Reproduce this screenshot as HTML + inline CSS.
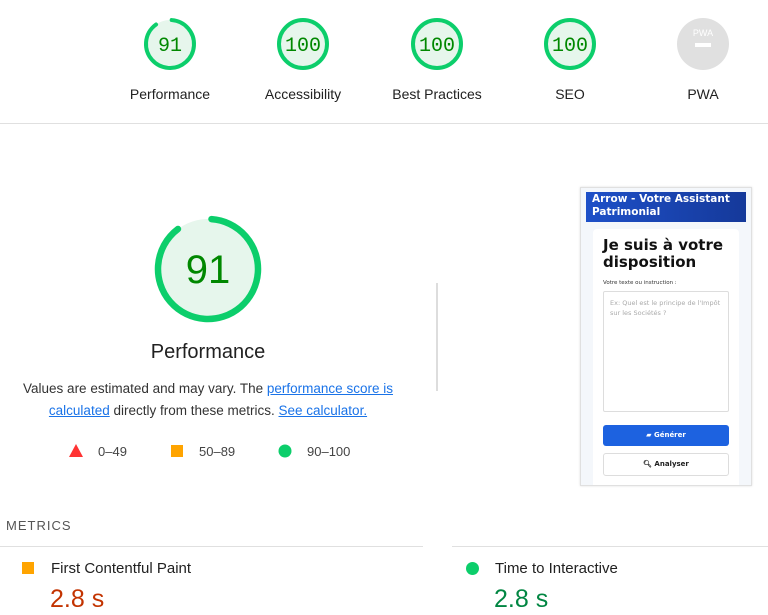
<!DOCTYPE html>
<html><head><style>
body{margin:0;width:768px;height:615px;overflow:hidden;background:#fff;font-family:"Liberation Sans",sans-serif;color:#212121;position:relative}
.a{position:absolute}
.lbl{position:absolute;width:140px;text-align:center;font-size:14px;top:86px}
</style></head><body>
<svg class="a" style="left:0;top:0" width="768" height="125">
<g fill="#e6f6ec" stroke="#0cce6b" stroke-width="4" stroke-linecap="round">
<circle cx="170" cy="44" r="24" stroke-dasharray="134 200" transform="rotate(-86 170 44)"/>
<circle cx="303" cy="44" r="24"/><circle cx="437" cy="44" r="24"/><circle cx="570" cy="44" r="24"/>
</g>
<circle cx="703" cy="44" r="26" fill="#e0e0e0"/>
<rect x="695" y="43" width="16" height="4" fill="#fff"/>
<text x="703" y="36" font-size="9" fill="#fff" text-anchor="middle" font-family="Liberation Sans">PWA</text>
<g font-family="Liberation Mono" font-size="20" fill="#008800" text-anchor="middle">
<text x="170" y="51">91</text><text x="303" y="51">100</text><text x="437" y="51">100</text><text x="570" y="51">100</text></g>
<line x1="0" y1="123.5" x2="768" y2="123.5" stroke="#e0e0e0"/>
</svg>
<div class="lbl" style="left:100px">Performance</div>
<div class="lbl" style="left:233px">Accessibility</div>
<div class="lbl" style="left:367px">Best Practices</div>
<div class="lbl" style="left:500px">SEO</div>
<div class="lbl" style="left:633px">PWA</div>

<svg class="a" style="left:150px;top:211px" width="116" height="116">
<circle cx="58" cy="58" r="50" fill="#e6f6ec" stroke="#0cce6b" stroke-width="6.5" stroke-linecap="round" stroke-dasharray="278 400" transform="rotate(-86 58 58)"/>
<text x="58" y="72" font-family="Liberation Sans" font-size="40" fill="#008800" text-anchor="middle">91</text>
</svg>
<div class="a" style="left:0;width:416px;top:341px;text-align:center;font-size:20px">Performance</div>
<div class="a" style="left:20px;width:376px;top:378px;text-align:center;font-size:13.5px;line-height:22px;color:#333">Values are estimated and may vary. The <span style="color:#1a73e8;text-decoration:underline">performance score is calculated</span> directly from these metrics. <span style="color:#1a73e8;text-decoration:underline">See calculator.</span></div>
<svg class="a" style="left:68px;top:443px" width="300" height="16">
<polygon points="8,1 15,14 1,14" fill="#f33"/>
<rect x="103" y="2" width="12" height="12" fill="#ffa400"/>
<circle cx="217" cy="8" r="6.5" fill="#0cce6b"/>
</svg>
<div class="a" style="left:98px;top:444px;font-size:13px;color:#444">0–49</div>
<div class="a" style="left:199px;top:444px;font-size:13px;color:#444">50–89</div>
<div class="a" style="left:307px;top:444px;font-size:13px;color:#444">90–100</div>
<div class="a" style="left:436px;top:283px;width:2px;height:108px;background:#ddd"></div>

<div class="a" style="left:580px;top:187px;width:170px;height:297px;border:1px solid #e0e0e0;box-shadow:0 0 2px #ddd;background:#f4f7fb;overflow:hidden">
<div style="margin:4px 5px 0;height:30px;background:linear-gradient(90deg,#1e50c8,#15399a);color:#fff;font:bold 10.5px 'DejaVu Sans',sans-serif;padding:1px 6px;line-height:13px;box-sizing:border-box">Arrow - Votre Assistant Patrimonial</div>
<div style="margin:7px 12px 0;background:#fff;border-radius:4px;height:260px;padding:8px 10px 0;font-family:'DejaVu Sans',sans-serif">
<div style="font-weight:bold;font-size:15px;line-height:17px;color:#111">Je suis à votre disposition</div>
<div style="font-size:5.5px;margin-top:9px;color:#333">Votre texte ou instruction :</div>
<div style="margin-top:5px;height:121px;border:1px solid #ddd;border-radius:2px;font-size:6.5px;color:#aaa;padding:6px;box-sizing:border-box;line-height:10px">Ex: Quel est le principe de l'Impôt sur les Sociétés ?</div>
<div style="margin-top:13px;height:21px;background:#1d62e0;border-radius:3px;color:#fff;font-size:7px;font-weight:bold;text-align:center;line-height:21px">▰ Générer</div>
<div style="margin-top:7px;height:21px;border:1px solid #ddd;border-radius:3px;color:#222;font-size:7px;font-weight:bold;text-align:center;line-height:21px">🔍︎ Analyser</div>
</div></div>

<div class="a" style="left:6px;top:518px;font-size:13px;letter-spacing:1px;color:#555">METRICS</div>
<div class="a" style="left:0;top:546px;width:423px;height:1px;background:#e0e0e0"></div>
<div class="a" style="left:452px;top:546px;width:316px;height:1px;background:#e0e0e0"></div>
<div class="a" style="left:22px;top:562px;width:12px;height:12px;background:#ffa400"></div>
<div class="a" style="left:51px;top:560px;font-size:15px">First Contentful Paint</div>
<div class="a" style="left:50px;top:585px;font-size:25px;color:#c33300">2.8 s</div>
<div class="a" style="left:466px;top:562px;width:13px;height:13px;border-radius:50%;background:#0cce6b"></div>
<div class="a" style="left:495px;top:560px;font-size:15px">Time to Interactive</div>
<div class="a" style="left:494px;top:585px;font-size:25px;color:#018642">2.8 s</div>
</body></html>
